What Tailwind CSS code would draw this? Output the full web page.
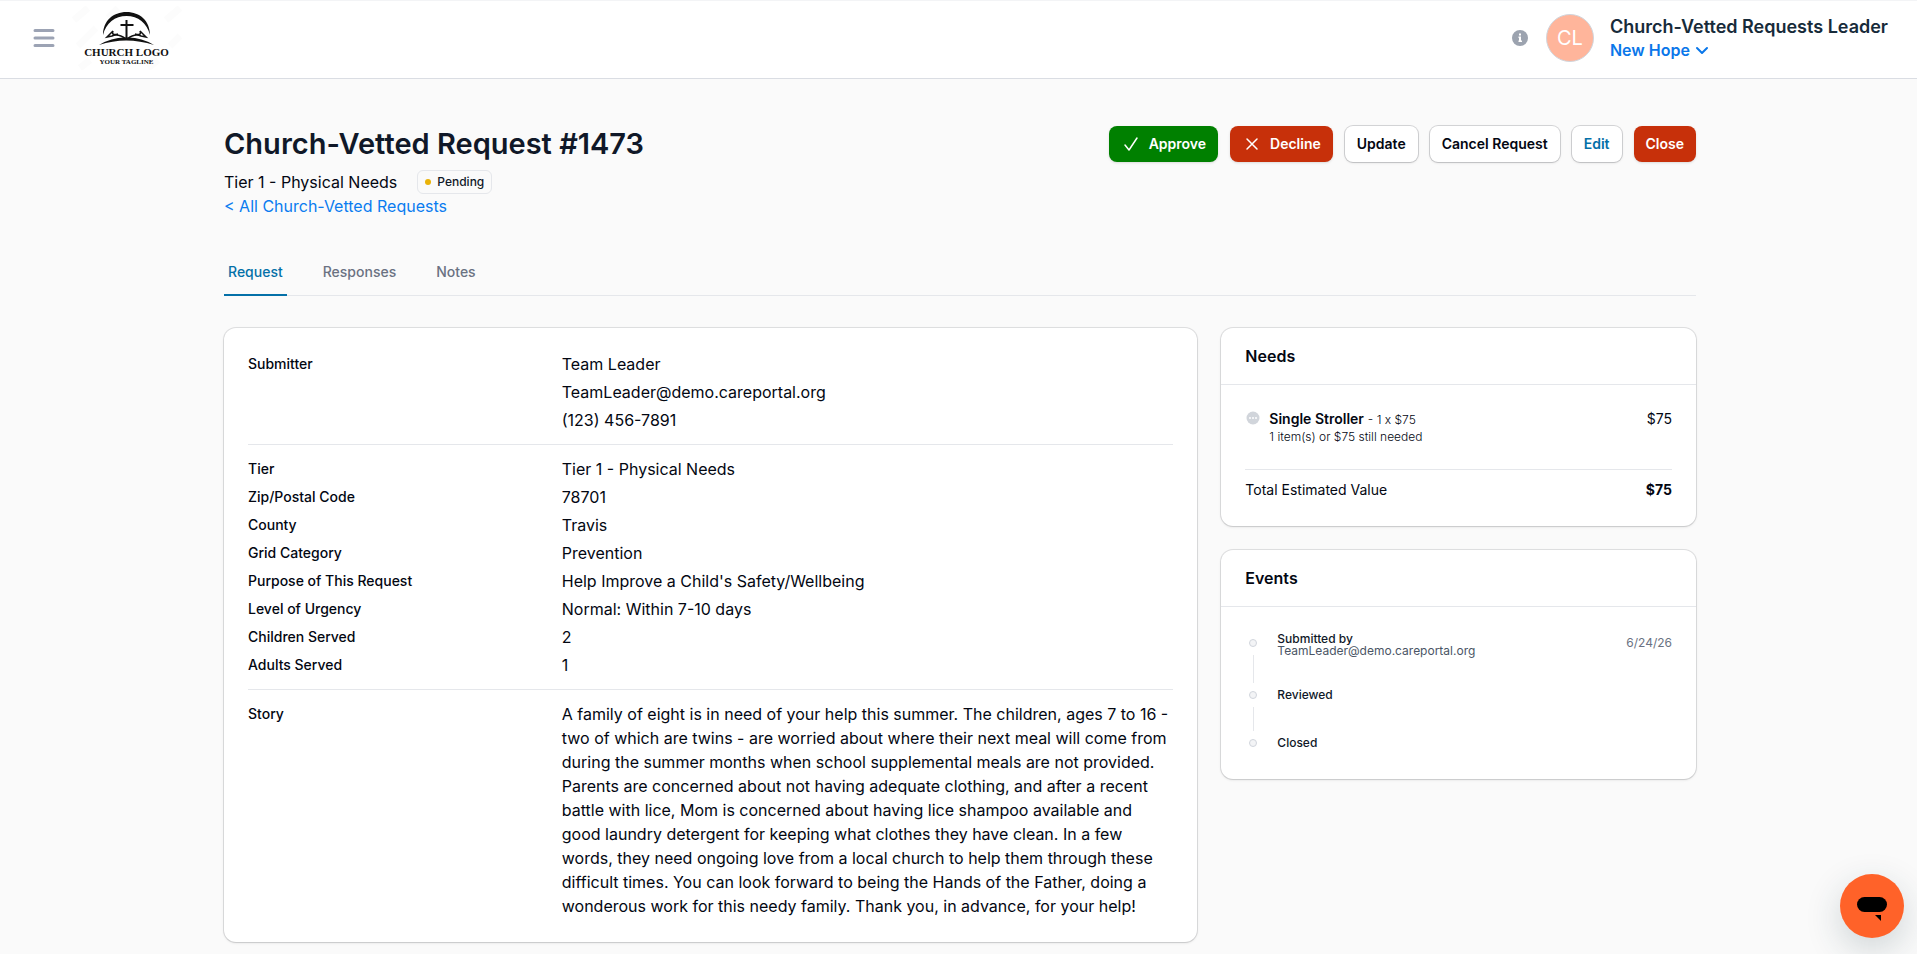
<!DOCTYPE html>
<html lang="en">

<head>
    <meta charset="UTF-8">
    <meta name="viewport" content="width=device-width, initial-scale=1.0">
    <script src="https://cdn.jsdelivr.net/npm/@tailwindcss/browser@4"></script>
    <title>Church-Vetted Request #1473</title>
</head>

<body class="bg-[#fafafa] text-gray-950 font-['Inter',sans-serif] min-h-screen">
    <!-- Top bar -->
    <header class="bg-white border-y border-t-gray-100 border-b-gray-300/80 flex items-center justify-between h-[79px] pb-[3px] pl-8 pr-[29px]">
        <div class="flex items-center gap-4">
            <button type="button" aria-label="Open menu">
                <svg class="w-6 h-6" viewBox="0 0 24 24" fill="none" stroke="#9ca3b4" stroke-width="3" stroke-linecap="round">
                    <path d="M3 4.500h18M3 12h18M3 19.500h18" />
                </svg>
            </button>
            <a href="#" aria-label="Home">
                <svg class="w-[110px] h-16" viewBox="0 0 110 64">
                    <g stroke="#fcfcfc" stroke-width="7">
                        <path d="M2 14L16 2M36 12L46 2M94 14L108 2M6 40L24 22M98 40L108 30M8 62L18 54M76 62L86 54" />
                    </g>
                    <path fill="#111" d="M31 29C31 15 41 6 54.500 6S78 15 78 29C75 17 66 10 54.500 10S34 17 31 29z" />
                    <path fill="#111" d="M53.500 14h2v4h6v2h-6v14h-2V20h-5v-2h5z" />
                    <path fill="#111" d="M27 39Q40 31 54.500 31.500Q69 31 82 39Q54 30 27 39z" />
                    <path fill="none" stroke="#111" stroke-width="1.500" d="M54 33Q46 27 40 30L35 31L41 25Q39 30 46 28M55 33Q63 27 69 30L74 31L68 25Q70 30 63 28" />
                    <text x="54.500" y="50" text-anchor="middle" font-family="Liberation Serif" font-weight="700" font-size="11" fill="#111">CHURCH LOGO</text>
                    <text x="54.500" y="58" text-anchor="middle" font-family="Liberation Serif" font-weight="700" font-size="7" fill="#111">YOUR TAGLINE</text>
                </svg>
            </a>
        </div>

        <div class="flex items-center">
            <svg class="w-4 h-4 mr-[18px]" viewBox="0 0 16 16">
                <circle cx="8" cy="8" r="8" fill="#9ca3af" />
                <path fill="#fff" d="M7 3.500h2v2H7zM6.500 6.500H9v4h1V12H6.500v-1.500H7V8h-.5z" />
            </svg>
            <span class="w-12 h-12 mr-4 rounded-full border border-gray-300 bg-[#ffb59b] text-white text-xl flex items-center justify-center">CL</span>
            <div>
                <p class="text-lg leading-6 font-semibold text-[#172b3a]">Church-Vetted Requests Leader</p>
                <button type="button" class="flex items-center gap-1 leading-[22px] font-semibold text-[#0a77ea]">
                    New Hope
                    <svg class="w-4 h-4" viewBox="0 0 16 16" fill="none" stroke="currentColor" stroke-width="2" stroke-linecap="round" stroke-linejoin="round">
                        <path d="M3 6l5 5 5-5" />
                    </svg>
                </button>
            </div>
        </div>
    </header>

    <main class="pl-[35px] pr-8 pt-[47px] pb-3">
        <div class="max-w-[1472px] mx-auto">
            <!-- Title and actions -->
            <div class="flex items-start justify-between">
                <div>
                    <h1 class="text-[29px] leading-9 font-semibold text-gray-900">Church-Vetted Request #1473</h1>
                    <div class="flex items-center gap-5 mt-2">
                        <p class="leading-6">Tier 1 - Physical Needs</p>
                        <span class="flex items-center gap-1.5 px-[7px] h-6 rounded-md border border-gray-200 text-xs font-medium text-gray-900">
                            <span class="w-1.5 h-1.5 rounded-full bg-[#eab308]"></span>
                            Pending
                        </span>
                    </div>
                    <a href="#" class="leading-6 text-[#0a7cf0]">&lt; All Church-Vetted Requests</a>
                </div>

                <div class="flex gap-3 text-sm font-semibold">
                    <button type="button" class="flex items-center gap-2 h-9 px-3 rounded-lg bg-[#008000] text-white shadow-sm">
                        <svg class="w-5 h-5" viewBox="0 0 20 20" fill="none" stroke="currentColor" stroke-width="1.500" stroke-linecap="round" stroke-linejoin="round">
                            <path d="M4 11l4 5 8-12" />
                        </svg>
                        Approve
                    </button>
                    <button type="button" class="flex items-center gap-2 h-9 px-3 rounded-lg bg-[#c7300a] text-white shadow-sm">
                        <svg class="w-5 h-5" viewBox="0 0 20 20" fill="none" stroke="currentColor" stroke-width="1.500" stroke-linecap="round">
                            <path d="M5 5l10 10M15 5L5 15" />
                        </svg>
                        Decline
                    </button>
                    <button type="button" class="h-9 px-3 rounded-lg bg-white ring-1 ring-gray-950/15 shadow-sm">Update</button>
                    <button type="button" class="h-9 px-3 rounded-lg bg-white ring-1 ring-gray-950/15 shadow-sm">Cancel Request</button>
                    <button type="button" class="h-9 px-3 rounded-lg bg-white ring-1 ring-gray-950/15 shadow-sm text-[#0470a8]">Edit</button>
                    <button type="button" class="h-9 px-3 rounded-lg bg-[#c7300a] text-white shadow-sm">Close</button>
                </div>
            </div>

            <!-- Tabs -->
            <nav class="flex gap-8 mt-7 border-b border-gray-200 text-sm font-medium text-gray-500">
                <a href="#" class="-mb-px px-1 pt-4 pb-3 border-b-2 border-[#0470a8] text-[#0470a8]">Request</a>
                <a href="#" class="-mb-px px-1 pt-4 pb-3">Responses</a>
                <a href="#" class="-mb-px px-1 pt-4 pb-3">Notes</a>
            </nav>

            <div class="grid grid-cols-3 items-start gap-6 mt-8">
                <!-- Request details -->
                <section class="col-span-2 px-6 py-3 rounded-xl bg-white ring-1 ring-gray-950/10 shadow-sm">
                    <dl class="grid grid-cols-3 gap-x-4 py-3 border-b border-gray-200">
                        <dt class="text-sm leading-6 font-medium">Submitter</dt>
                        <dd class="col-span-2 flex flex-col gap-1 leading-6">
                            <span>Team Leader</span>
                            <span>TeamLeader@demo.careportal.org</span>
                            <span>(123) 456-7891</span>
                        </dd>
                    </dl>
                    <dl class="grid grid-cols-3 gap-x-4 gap-y-1 py-3 border-b border-gray-200">
                        <dt class="text-sm leading-6 font-medium">Tier</dt>
                        <dd class="col-span-2 leading-6">Tier 1 - Physical Needs</dd>
                        <dt class="text-sm leading-6 font-medium">Zip/Postal Code</dt>
                        <dd class="col-span-2 leading-6">78701</dd>
                        <dt class="text-sm leading-6 font-medium">County</dt>
                        <dd class="col-span-2 leading-6">Travis</dd>
                        <dt class="text-sm leading-6 font-medium">Grid Category</dt>
                        <dd class="col-span-2 leading-6">Prevention</dd>
                        <dt class="text-sm leading-6 font-medium">Purpose of This Request</dt>
                        <dd class="col-span-2 leading-6">Help Improve a Child's Safety/Wellbeing</dd>
                        <dt class="text-sm leading-6 font-medium">Level of Urgency</dt>
                        <dd class="col-span-2 leading-6">Normal: Within 7-10 days</dd>
                        <dt class="text-sm leading-6 font-medium">Children Served</dt>
                        <dd class="col-span-2 leading-6">2</dd>
                        <dt class="text-sm leading-6 font-medium">Adults Served</dt>
                        <dd class="col-span-2 leading-6">1</dd>
                    </dl>
                    <dl class="grid grid-cols-3 gap-x-4 py-3">
                        <dt class="text-sm leading-6 font-medium">Story</dt>
                        <dd class="col-span-2 leading-6">A family of eight is in need of your help this summer. The children, ages 7 to 16 - two of which are twins - are worried about where their next meal will come from during the summer months when school supplemental meals are not provided. Parents are concerned about not having adequate clothing, and after a recent battle with lice, Mom is concerned about having lice shampoo available and good laundry detergent for keeping what clothes they have clean. In a few words, they need ongoing love from a local church to help them through these difficult times. You can look forward to being the Hands of the Father, doing a wonderous work for this needy family. Thank you, in advance, for your help!</dd>
                    </dl>
                </section>

                <div class="flex flex-col gap-6">
                    <!-- Needs -->
                    <section class="rounded-xl bg-white ring-1 ring-gray-950/10 shadow-sm">
                        <h2 class="px-6 py-4 leading-6 font-semibold border-b border-gray-200">Needs</h2>
                        <div class="px-6 pt-6 pb-[26px] text-sm">
                            <div class="flex gap-2 pb-6">
                                <svg class="w-4 h-4 mt-px" viewBox="0 0 16 16">
                                    <circle cx="8" cy="8" r="6.500" fill="#d1d5db" />
                                    <path fill="#f3f4f6" d="M4 7h2v2H4zM7 7h2v2H7zM10 7h2v2h-2z" />
                                </svg>
                                <div class="flex-1">
                                    <p><strong class="font-semibold">Single Stroller</strong> <span class="text-xs font-light">- 1 x $75</span></p>
                                    <p class="text-xs font-light">1 item(s) or $75 still needed</p>
                                </div>
                                <p>$75</p>
                            </div>
                            <div class="flex justify-between pt-2.5 border-t border-gray-200">
                                <p>Total Estimated Value</p>
                                <p class="font-bold">$75</p>
                            </div>
                        </div>
                    </section>

                    <!-- Events -->
                    <section class="rounded-xl bg-white ring-1 ring-gray-950/10 shadow-sm">
                        <h2 class="px-6 py-4 leading-6 font-semibold border-b border-gray-200">Events</h2>
                        <ol class="p-6 text-xs">
                            <li class="flex gap-4">
                                <div class="w-4 flex flex-col items-center">
                                    <span class="w-2 h-2 my-2 rounded-full border border-gray-300 bg-gray-100"></span>
                                    <span class="w-px h-7 bg-gray-200"></span>
                                </div>
                                <div class="flex-1 leading-3">
                                    <p class="pt-0.5 font-medium text-gray-900">Submitted by</p>
                                    <p class="text-gray-600">TeamLeader@demo.careportal.org</p>
                                </div>
                                <time class="leading-6 text-gray-500">6/24/26</time>
                            </li>
                            <li class="flex gap-4">
                                <div class="w-4 flex flex-col items-center">
                                    <span class="w-2 h-2 my-2 rounded-full border border-gray-300 bg-gray-100"></span>
                                    <span class="w-px h-6 bg-gray-200"></span>
                                </div>
                                <p class="leading-6 font-medium text-gray-900">Reviewed</p>
                            </li>
                            <li class="flex gap-4">
                                <div class="w-4 flex flex-col items-center">
                                    <span class="w-2 h-2 my-2 rounded-full border border-gray-300 bg-gray-100"></span>
                                </div>
                                <p class="leading-6 font-medium text-gray-900">Closed</p>
                            </li>
                        </ol>
                    </section>
                </div>
            </div>
        </div>
    </main>

    <!-- Chat launcher -->
    <button type="button" aria-label="Open chat" class="fixed right-[13px] bottom-4 w-16 h-16 rounded-full bg-[#ff6229] shadow-[0_12px_36px_rgba(30,60,70,0.2)]">
        <svg class="w-16 h-16" viewBox="0 0 64 64">
            <rect x="17" y="23" width="30" height="15" rx="7.500" />
            <path d="M35 41h6v6z" />
        </svg>
    </button>
</body>

</html>
